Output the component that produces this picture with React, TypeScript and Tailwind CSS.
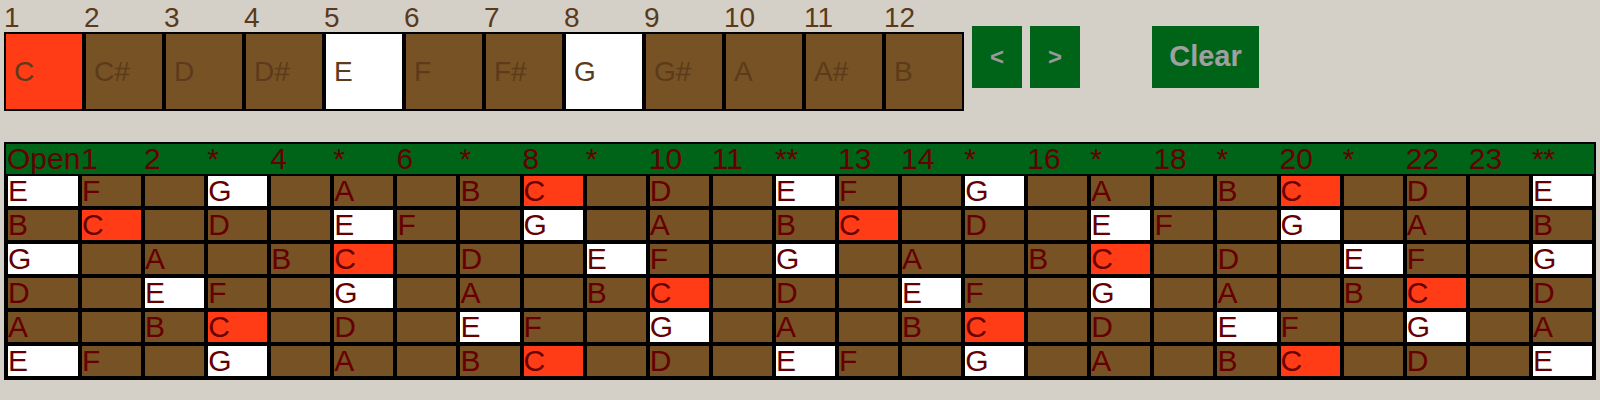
import { useState } from 'react';

const NOTES = ['C', 'C#', 'D', 'D#', 'E', 'F', 'F#', 'G', 'G#', 'A', 'A#', 'B'];
// strings top to bottom, as semitone index from C
const STRINGS = [4, 11, 7, 2, 9, 4];
const FRETS = 25;

const headerLabel = (fret: number) => {
  if (fret === 0) return 'Open';
  if (fret === 12 || fret === 24) return '**';
  if ([3, 5, 7, 9, 15, 17, 19, 21].includes(fret)) return '*';
  return String(fret);
};

export default function App() {
  const [selected] = useState<string[]>(['C', 'E', 'G']);

  const noteBg = (note: string) => {
    if (note === 'C') return 'bg-[#ff3c16]';
    if (selected.includes(note)) return 'bg-white';
    return 'bg-[#775224]';
  };

  return (
    <div className="w-[1600px] h-[400px] bg-[#d4d0c8] pl-[4px] font-['Liberation_Sans',Arial,sans-serif]">
      {/* Note picker */}
      <div className="flex items-end">
        {NOTES.map((note, i) => (
          <div key={note} className="w-[80px] flex flex-col">
            <div className="h-[32px] pt-[2px] text-[28px] leading-[32px] text-[#5a3a1a]">{i + 1}</div>
            <div className={`h-[79px] border-2 border-black flex items-center pl-[8px] text-[28px] text-[#5b3b1b] ${noteBg(note)}`}>
              {note}
            </div>
          </div>
        ))}
        <div className="flex self-start mt-[26px] ml-[8px] gap-[8px]">
          <button className="w-[50px] h-[62px] bg-[#006418] text-[#999999] text-[24px] font-bold">&lt;</button>
          <button className="w-[50px] h-[62px] bg-[#006418] text-[#999999] text-[24px] font-bold">&gt;</button>
          <button className="ml-[64px] w-[107px] h-[62px] bg-[#006418] text-[#a0a0a0] text-[29px] font-bold">Clear</button>
        </div>
      </div>

      {/* Fretboard */}
      <div className="mt-[31px] w-[1592px] border-2 border-black text-[#660000]">
        <div className="grid grid-cols-[74px_repeat(24,1fr)] h-[30px] bg-[#006418]">
          {Array.from({ length: FRETS }, (_, f) => (
            <div key={f} className="pl-[1px] text-[30px] leading-[30px] whitespace-nowrap">{headerLabel(f)}</div>
          ))}
        </div>
        {STRINGS.map((open, s) => (
          <div key={s} className="grid grid-cols-[74px_repeat(24,1fr)]">
            {Array.from({ length: FRETS }, (_, f) => {
              const note = NOTES[(open + f) % 12];
              const natural = !note.includes('#');
              return (
                <div
                  key={f}
                  className={`h-[34px] border-2 border-black flex items-center text-[30px] leading-none ${natural ? noteBg(note) : 'bg-[#775224]'}`}
                >
                  {natural ? note : ''}
                </div>
              );
            })}
          </div>
        ))}
      </div>
    </div>
  );
}
